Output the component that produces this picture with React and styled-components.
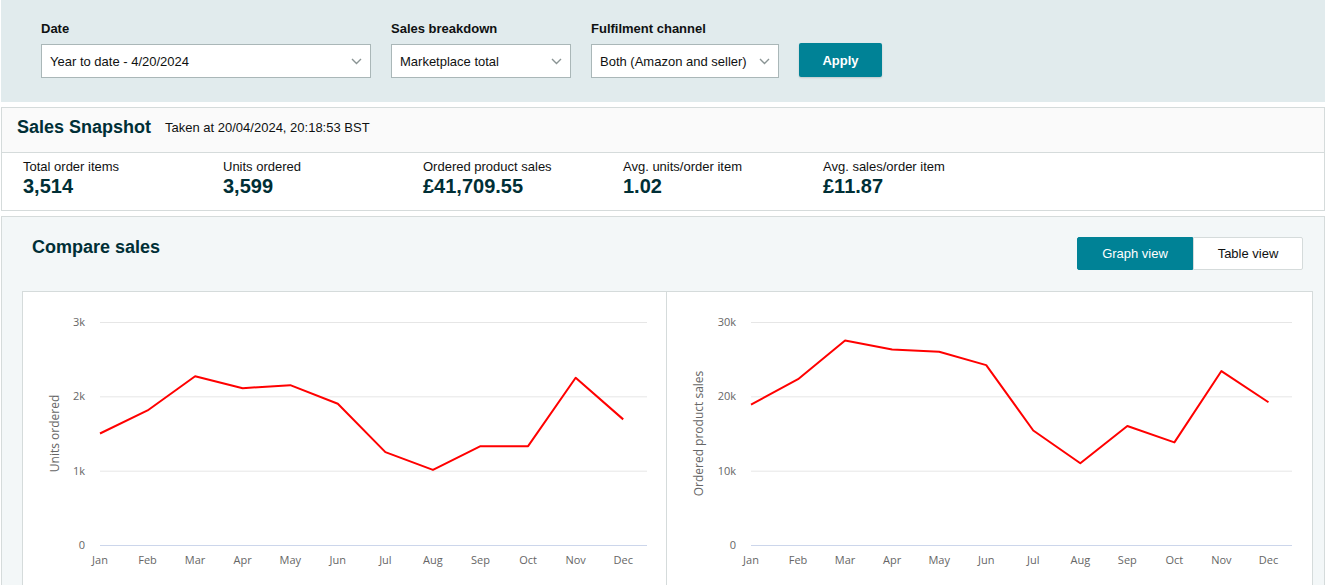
import React from "react";
import styled, { createGlobalStyle } from "styled-components";

const GlobalStyle = createGlobalStyle`
  body {
    margin: 0;
    font-family: "Liberation Sans", Arial, sans-serif;
    color: #0f1111;
    background: #ffffff;
  }
`;

const Page = styled.div`
  padding: 0 1px;
  width: 1326px;
  box-sizing: border-box;
`;

const FilterBar = styled.div`
  background-color: #e1ebed;
  height: 102px;
  box-sizing: border-box;
  padding: 20px 0 24px 40px;
  display: flex;
  align-items: flex-end;
  gap: 20px;
`;

const Field = styled.div`
  display: flex;
  flex-direction: column;
`;

const FieldLabel = styled.label`
  font-size: 13px;
  font-weight: bold;
  line-height: 18px;
  margin-bottom: 6px;
  color: #0f1111;
`;

const SelectBox = styled.div`
  width: ${(props) => props.width}px;
  height: 34px;
  box-sizing: border-box;
  background: #ffffff;
  border: 1px solid #aab7b8;
  padding: 0 8px;
  display: flex;
  align-items: center;
  justify-content: space-between;
  font-size: 13px;
  color: #0f1111;
`;

const ApplyButton = styled.button`
  width: 83px;
  height: 34px;
  margin-bottom: 1px;
  background-color: #008296;
  border: none;
  border-radius: 2px;
  color: #ffffff;
  font-family: "Liberation Sans", Arial, sans-serif;
  font-size: 13px;
  font-weight: bold;
  box-shadow: 0 1px 2px rgba(0, 0, 0, 0.15);
`;

const Card = styled.section`
  margin-top: 5px;
  border: 1px solid #d5dbdb;
  background: ${(props) => props.bg || "#ffffff"};
`;

const SnapshotHeader = styled.div`
  height: 45px;
  box-sizing: border-box;
  background: #fafafa;
  border-bottom: 1px solid #d5dbdb;
  padding: 0 15px 6px;
  display: flex;
  align-items: center;
  gap: 14px;
`;

const Title = styled.h2`
  margin: 0;
  font-size: 18px;
  line-height: 20px;
  font-weight: bold;
  color: #002f36;
`;

const Taken = styled.span`
  font-size: 13px;
  color: #0f1111;
`;

const Metrics = styled.div`
  display: flex;
  padding: 6px 0 12px 21px;
`;

const Metric = styled.div`
  width: 200px;
  display: flex;
  flex-direction: column;
`;

const MetricLabel = styled.span`
  font-size: 13px;
  line-height: 15px;
  color: #0f1111;
`;

const MetricValue = styled.span`
  font-size: 20px;
  line-height: 24px;
  font-weight: bold;
  color: #002f36;
`;

const CompareHeader = styled.div`
  display: flex;
  justify-content: space-between;
  align-items: flex-start;
  padding: 20px 21px 0 30px;
`;

const Toggle = styled.div`
  display: flex;
  height: 33px;
`;

const ToggleButton = styled.button`
  width: ${(props) => props.width}px;
  height: 33px;
  box-sizing: border-box;
  font-family: "Liberation Sans", Arial, sans-serif;
  font-size: 13px;
  border: 1px solid ${(props) => (props.active ? "#008296" : "#d5dbdb")};
  background: ${(props) => (props.active ? "#008296" : "#ffffff")};
  color: ${(props) => (props.active ? "#ffffff" : "#0f1111")};
  border-radius: ${(props) => (props.active ? "2px 0 0 2px" : "0 2px 2px 0")};
`;

const ChartPanel = styled.div`
  margin: 21px 11px 0 20px;
  background: #ffffff;
  border: 1px solid #d5dbdb;
  display: grid;
  grid-template-columns: 644px 1fr;
`;

const ChartCell = styled.div`
  height: 300px;
  border-right: ${(props) => (props.divider ? "1px solid #d5dbdb" : "none")};
`;

const ChartSvg = styled.svg`
  display: block;
  font-family: "Open Sans", "DejaVu Sans", sans-serif;
`;

const months = ["Jan", "Feb", "Mar", "Apr", "May", "Jun", "Jul", "Aug", "Sep", "Oct", "Nov", "Dec"];

function Chevron() {
  return (
    <svg width="11" height="7" viewBox="0 0 11 7">
      <polyline points="1,1 5.5,5.5 10,1" fill="none" stroke="#8a9494" strokeWidth="1.4" />
    </svg>
  );
}

function LineChart({ plotLeft, plotRight, ticks, max, data, title }) {
  const top = 30;
  const bottom = 253;
  const step = (plotRight - plotLeft) / 11.5;
  const yOf = (v) => bottom - (v / max) * (bottom - top);
  const points = data.map((v, i) => `${plotLeft + i * step},${yOf(v)}`).join(" ");
  return (
    <ChartSvg width="100%" height="300">
      {ticks.map((t, i) => {
        const y = yOf((max / (ticks.length - 1)) * i);
        return (
          <g key={t}>
            <line
              x1={plotLeft}
              x2={plotRight}
              y1={y + 0.5}
              y2={y + 0.5}
              stroke={i === 0 ? "#ccd6eb" : "#e6e6e6"}
              strokeWidth="1"
            />
            <text x={plotLeft - 15} y={y + 4} textAnchor="end" fontSize="11" fill="#666666">
              {t}
            </text>
          </g>
        );
      })}
      {months.map((m, i) => (
        <text key={m} x={plotLeft + i * step} y={272} textAnchor="middle" fontSize="11" fill="#666666">
          {m}
        </text>
      ))}
      <text
        x={0}
        y={0}
        transform={`translate(36, ${(top + bottom) / 2}) rotate(-90)`}
        textAnchor="middle"
        fontSize="12"
        fill="#666666"
      >
        {title}
      </text>
      <polyline points={points} fill="none" stroke="#ff0000" strokeWidth="2" strokeLinejoin="round" />
    </ChartSvg>
  );
}

const unitsData = [1.5, 1.81, 2.27, 2.11, 2.15, 1.9, 1.25, 1.01, 1.33, 1.33, 2.25, 1.69];
const salesData = [18.9, 22.3, 27.5, 26.3, 26.0, 24.2, 15.4, 11.0, 16.0, 13.8, 23.4, 19.2];

const metrics = [
  ["Total order items", "3,514"],
  ["Units ordered", "3,599"],
  ["Ordered product sales", "£41,709.55"],
  ["Avg. units/order item", "1.02"],
  ["Avg. sales/order item", "£11.87"],
];

export default function App() {
  return (
    <Page>
      <GlobalStyle />
      <FilterBar>
        <Field>
          <FieldLabel>Date</FieldLabel>
          <SelectBox width={330}>
            Year to date - 4/20/2024
            <Chevron />
          </SelectBox>
        </Field>
        <Field>
          <FieldLabel>Sales breakdown</FieldLabel>
          <SelectBox width={180}>
            Marketplace total
            <Chevron />
          </SelectBox>
        </Field>
        <Field>
          <FieldLabel>Fulfilment channel</FieldLabel>
          <SelectBox width={188}>
            Both (Amazon and seller)
            <Chevron />
          </SelectBox>
        </Field>
        <ApplyButton>Apply</ApplyButton>
      </FilterBar>

      <Card>
        <SnapshotHeader>
          <Title>Sales Snapshot</Title>
          <Taken>Taken at 20/04/2024, 20:18:53 BST</Taken>
        </SnapshotHeader>
        <Metrics>
          {metrics.map(([label, value]) => (
            <Metric key={label}>
              <MetricLabel>{label}</MetricLabel>
              <MetricValue>{value}</MetricValue>
            </Metric>
          ))}
        </Metrics>
      </Card>

      <Card bg="#f3f7f8">
        <CompareHeader>
          <Title>Compare sales</Title>
          <Toggle>
            <ToggleButton active width={116}>
              Graph view
            </ToggleButton>
            <ToggleButton width={110}>Table view</ToggleButton>
          </Toggle>
        </CompareHeader>
        <ChartPanel>
          <ChartCell divider>
            <LineChart
              plotLeft={77}
              plotRight={624}
              ticks={["0", "1k", "2k", "3k"]}
              max={3}
              data={unitsData}
              title="Units ordered"
            />
          </ChartCell>
          <ChartCell>
            <LineChart
              plotLeft={84}
              plotRight={625}
              ticks={["0", "10k", "20k", "30k"]}
              max={30}
              data={salesData}
              title="Ordered product sales"
            />
          </ChartCell>
        </ChartPanel>
      </Card>
    </Page>
  );
}
